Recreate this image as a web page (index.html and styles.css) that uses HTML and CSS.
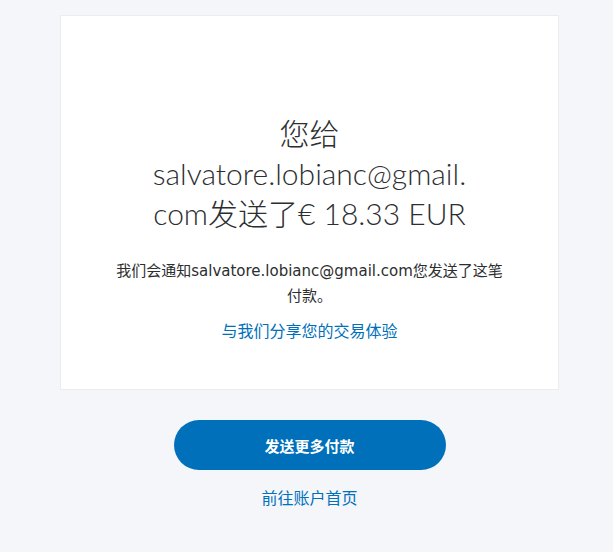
FILE: index.html
```html
<!DOCTYPE html>
<html lang="zh-CN">
<head>
  <meta charset="UTF-8">
  <meta name="viewport" content="width=device-width, initial-scale=1">
  <title>付款已发送</title>
  <link rel="stylesheet" href="styles.css">
</head>
<body>
  <!-- Confirmation Card -->
  <div class="card">
    <h1 class="title">您给salvatore.lobianc@gmail.<wbr>com发送了€ 18.33 EUR</h1>
    <p class="note">我们会通知salvatore.lobianc@gmail.com您发送了这笔付款。</p>
    <a class="share" href="#">与我们分享您的交易体验</a>
  </div>

  <!-- Actions -->
  <div class="actions">
    <button class="btn-primary">发送更多付款</button>
    <a class="home-link" href="#">前往账户首页</a>
  </div>
</body>
</html>
```

FILE: styles.css
```css
/* General Reset */
* {
  margin: 0;
  padding: 0;
  box-sizing: border-box;
}

body {
  font-family: Lato, "Noto Sans CJK SC", sans-serif;
  background-color: #f5f6fa;
  color: #2c2e2f;
  padding-top: 15px;
}

/* Card */
.card {
  width: 499px;
  height: 375px;
  margin-left: 60px;
  background-color: #fff;
  border: 1px solid #eaecf0;
  display: flex;
  flex-direction: column;
  align-items: center;
  padding: 97px 48px 0;
  text-align: center;
}

.title {
  max-width: 340px;
  font-size: 30px;
  font-weight: 300;
  line-height: 40px;
  overflow-wrap: anywhere;
}

.note {
  margin-top: 26px;
  max-width: 392px;
  font-family: "DejaVu Sans", "Noto Sans CJK SC", sans-serif;
  font-size: 15px;
  line-height: 25px;
}

.share {
  margin-top: 10px;
  font-size: 16px;
  line-height: 24px;
  color: #0070ba;
  text-decoration: none;
}

/* Actions */
.actions {
  display: flex;
  flex-direction: column;
  align-items: center;
  padding-top: 30px;
  margin-left: 60px;
  width: 499px;
}

.btn-primary {
  width: 272px;
  height: 50px;
  border: none;
  border-radius: 25px;
  background-color: #0070ba;
  color: #fff;
  font-family: inherit;
  font-size: 15px;
  font-weight: 600;
  cursor: pointer;
}

.home-link {
  margin-top: 16px;
  font-size: 16px;
  line-height: 24px;
  color: #0070ba;
  text-decoration: none;
}
```
